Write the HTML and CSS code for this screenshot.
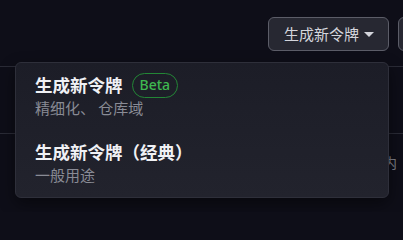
FILE: index.html
```html
<!DOCTYPE html>
<html lang="zh-CN">
<head>
<meta charset="utf-8">
<title>令牌</title>
<link rel="stylesheet" href="styles.css">
</head>
<body>
<div class="page">
  <div class="header">
    <button class="btn">生成新令牌<span class="caret"></span></button>
    <button class="btn btn-next" aria-label="更多"></button>
  </div>
  <div class="row"></div>
  <div class="row row-text"><span class="muted">令牌将在 30 天内</span></div>

  <div class="menu">
    <div class="item">
      <div class="item-title">生成新令牌<span class="badge">Beta</span></div>
      <div class="item-sub">精细化、 仓库域</div>
    </div>
    <div class="item">
      <div class="item-title">生成新令牌（经典）</div>
      <div class="item-sub">一般用途</div>
    </div>
  </div>
</div>
</body>
</html>
```
FILE: styles.css
```css
* { box-sizing: border-box; }
html, body {
  margin: 0;
  padding: 0;
  background: #0e0e18;
  overflow: hidden;
  font-family: "Noto Sans CJK SC", "Noto Sans", sans-serif;
}
.page {
  position: relative;
  width: 403px;
  height: 212px;
  overflow: hidden;
}
.header {
  display: flex;
  justify-content: flex-end;
  gap: 9px;
  height: 67px;
  padding-top: 17px;
  margin-right: -77px;
  border-bottom: 1px solid #2a2b36;
}
.btn {
  display: flex;
  align-items: center;
  flex-shrink: 0;
  height: 34px;
  padding: 0 14px 0 15px;
  background: #272832;
  border: 1px solid #5c5d68;
  border-radius: 6px;
  color: #d4d5dc;
  font-family: "Noto Sans CJK SC", "Noto Sans", sans-serif;
  font-size: 15px;
  line-height: 20px;
  white-space: nowrap;
  width: 121px;
}
.btn-next {
  width: 82px;
}
.caret {
  width: 0;
  height: 0;
  margin-left: 5px;
  border-top: 5px solid #d4d5dc;
  border-left: 5px solid transparent;
  border-right: 5px solid transparent;
}
.row {
  height: 67px;
  border-bottom: 1px solid #2a2b36;
}
.row-text {
  display: flex;
  justify-content: flex-end;
  align-items: center;
  height: 56px;
  padding-right: 6px;
  border-bottom: none;
}
.muted {
  color: #7c7e88;
  font-size: 14px;
  white-space: nowrap;
}
.menu {
  position: absolute;
  left: 15px;
  top: 62px;
  width: 374px;
  background: linear-gradient(#1c1d27, #22232d);
  border: 1px solid #2e2f3a;
  border-radius: 6px;
  box-shadow: 0 6px 16px rgba(0, 0, 0, 0.45);
}
.item {
  padding: 10px 19px 11px;
}
.item-title {
  display: flex;
  align-items: center;
  height: 24px;
  color: #f0f1f5;
  font-size: 17.5px;
  font-weight: 700;
  line-height: 24px;
  white-space: nowrap;
}
.badge {
  display: inline-flex;
  align-items: center;
  height: 25px;
  margin-left: 9px;
  padding: 0 7px;
  border: 1px solid #238636;
  border-radius: 13px;
  color: #3fb950;
  font-family: "Noto Sans", sans-serif;
  font-size: 14px;
  font-weight: 500;
  line-height: 20px;
}
.item-sub {
  color: #898b95;
  font-size: 15px;
  line-height: 22px;
  white-space: nowrap;
}
```
